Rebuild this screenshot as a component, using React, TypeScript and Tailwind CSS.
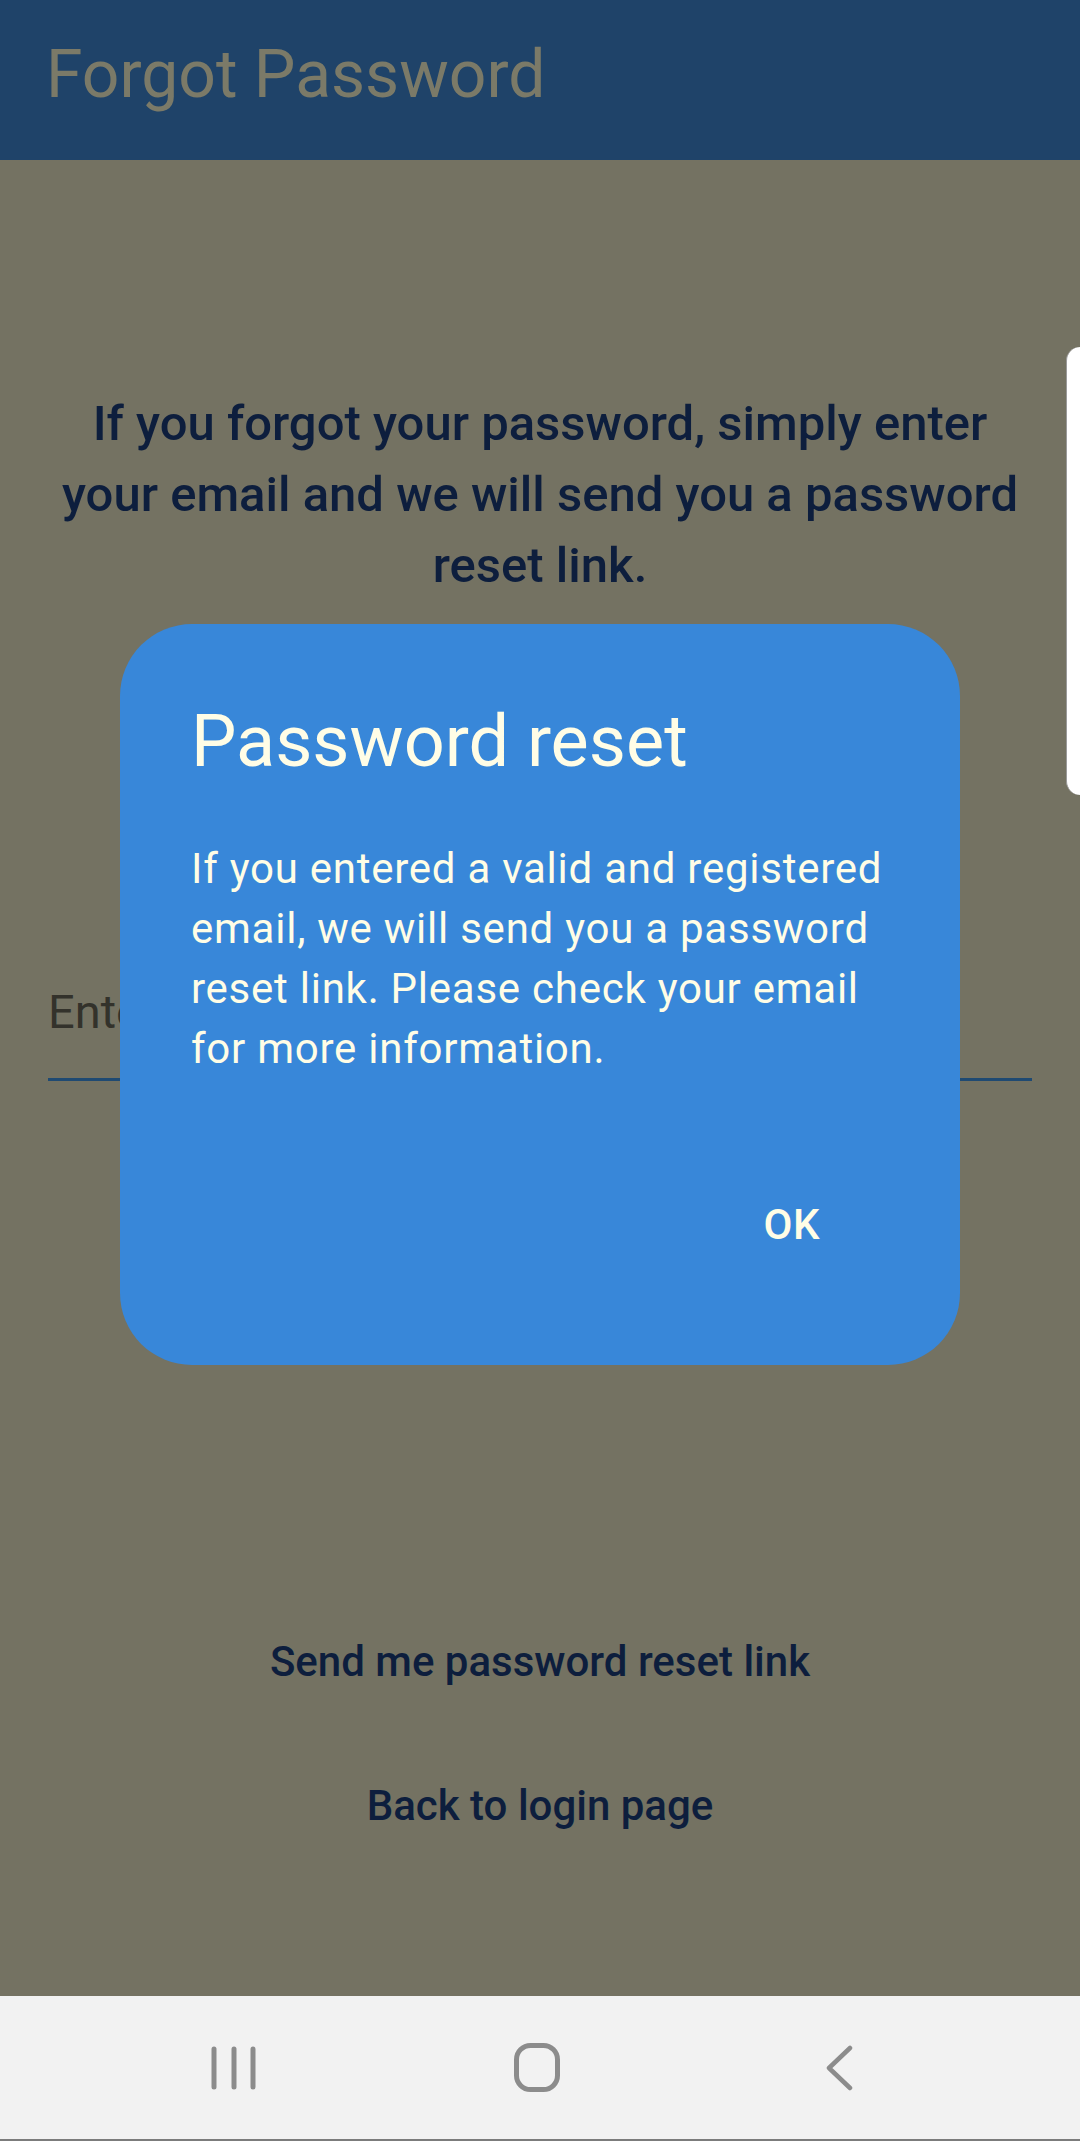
import React from 'react';

function RecentsIcon() {
  return (
    <svg width="50" height="50" viewBox="0 0 50 50" fill="none" stroke="#8c8c8c" strokeWidth="5" strokeLinecap="round">
      <line x1="5" y1="6" x2="5" y2="44" />
      <line x1="25" y1="6" x2="25" y2="44" />
      <line x1="44" y1="6" x2="44" y2="44" />
    </svg>
  );
}

function HomeIcon() {
  return (
    <svg width="46" height="49" viewBox="0 0 46 49" fill="none" stroke="#8c8c8c" strokeWidth="5">
      <rect x="2.5" y="2.5" width="41" height="44" rx="14" />
    </svg>
  );
}

function BackIcon() {
  return (
    <svg width="30" height="46" viewBox="0 0 30 46" fill="none" stroke="#8c8c8c" strokeWidth="4.5" strokeLinecap="round" strokeLinejoin="round">
      <polyline points="25,3 4,23 25,43" />
    </svg>
  );
}

export default function App() {
  return (
    <div className="relative flex flex-col h-[2141px] w-[1080px] overflow-hidden bg-[#747262] font-['Roboto',sans-serif]">
      {/* App bar */}
      <header className="h-[160px] shrink-0 bg-[#1f4369] flex items-center px-[46px] pb-[10px]">
        <h1 className="text-[66px] leading-none text-[#7b7a68]">Forgot Password</h1>
      </header>

      {/* Page content (dimmed by the dialog scrim) */}
      <main className="flex-1 flex flex-col px-[48px]">
        <p className="mt-[228px] text-center text-[49px] leading-[71px] font-medium text-[#0d1e3d]">
          If you forgot your password, simply enter
          <br />
          your email and we will send you a password
          <br />
          reset link.
        </p>

        <div className="mt-[383px] border-b-[3px] border-[#1f4a72] pb-[38px]">
          <span className="block text-[47px] leading-[56px] text-[#33322b]">Enter your email</span>
        </div>

        <div className="mt-[553px] flex flex-col items-center gap-[88px] text-[42px] leading-[56px] font-medium text-[#0d1e3d]">
          <span>Send me password reset link</span>
          <span>Back to login page</span>
        </div>
      </main>

      {/* Navigation bar */}
      <nav className="h-[145px] shrink-0 bg-[#f2f2f2] border-b-2 border-[#7c7c7c] flex items-center pl-[82px]">
        <div className="w-[303px] flex justify-center"><RecentsIcon /></div>
        <div className="w-[303px] flex justify-center"><HomeIcon /></div>
        <div className="w-[303px] flex justify-center"><BackIcon /></div>
      </nav>

      {/* Edge panel handle */}
      <div className="absolute right-0 top-[347px] w-[14px] h-[448px] bg-white rounded-l-[14px] border-l border-[#9a9a9a]" />

      {/* Dialog */}
      <div className="absolute left-[120px] top-[624px] w-[840px] h-[741px] bg-[#3887d9] rounded-[72px] flex flex-col pl-[71px] pr-[60px] pt-[74px] text-[#fffde6]">
        <h2 className="text-[72px] leading-[88px]">Password reset</h2>
        <p className="mt-[53px] text-[42px] leading-[60px] tracking-[0.75px]">
          If you entered a valid and registered
          <br />
          email, we will send you a password
          <br />
          reset link. Please check your email
          <br />
          for more information.
        </p>
        <div className="mt-[118px] flex justify-end pr-[80px]">
          <span className="text-[42px] leading-[56px] font-medium tracking-[0.5px]">OK</span>
        </div>
      </div>
    </div>
  );
}
